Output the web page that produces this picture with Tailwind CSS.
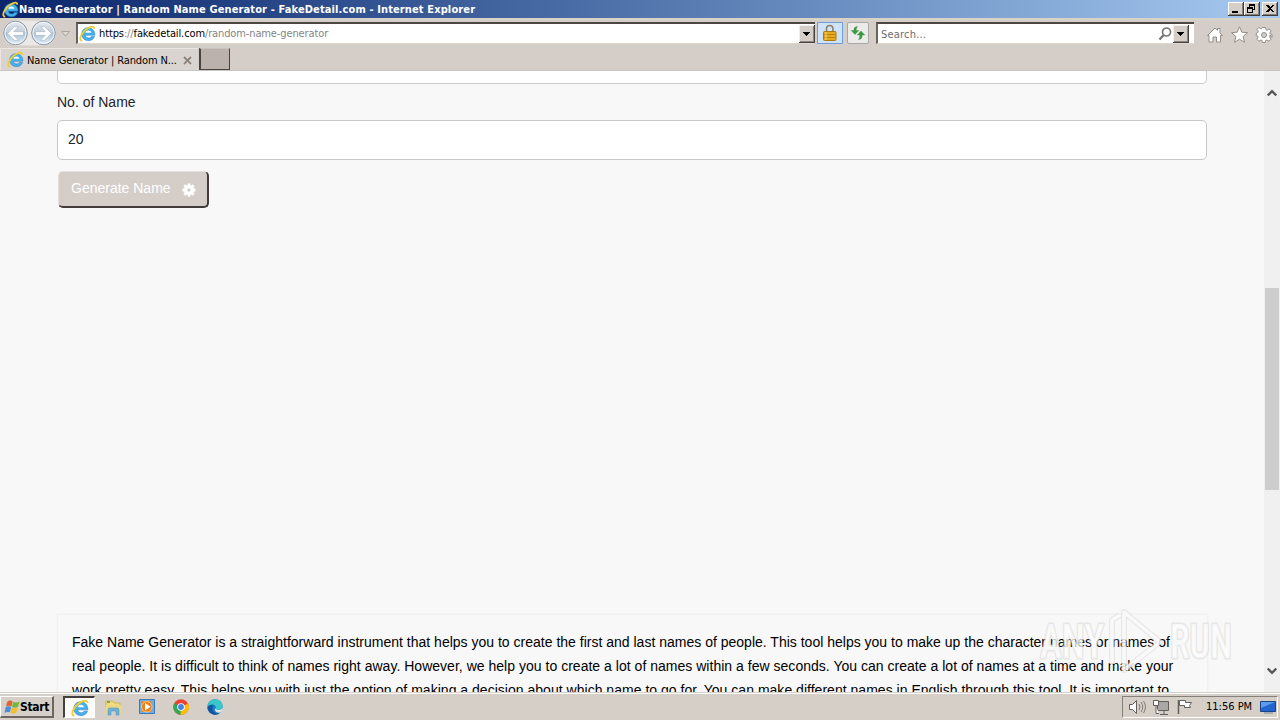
<!DOCTYPE html>
<html lang="en">
<head>
<meta charset="utf-8">
<title>Name Generator</title>
<script src="https://cdn.jsdelivr.net/npm/@tailwindcss/browser@4"></script>
</head>
<body class="w-[1280px] h-[720px] overflow-hidden bg-[#d5cfca] font-['DejaVu_Sans_Condensed','DejaVu_Sans',sans-serif] font-stretch-condensed text-[11px] text-black">
<svg class="hidden">
  <symbol id="ie" viewBox="0 0 16 16">
    <path d="M15 9.600H6c.3 3.200 4.600 3.300 5.600 1.200h3.100C12.700 16.800 2.500 16 2.500 8.500 2.500.4 15.200.3 15 9.600z" fill="#46b0ea" stroke="#2b82c8" stroke-width=".5"/>
    <path d="M6 7.300h5.600c-.3-2.900-5.100-3-5.600 0z" fill="#f5fbff"/>
    <path d="M3 15C-1 14.500 2 7 8 3.200c3.500-2.200 6.500-2.400 6.300.3" fill="none" stroke="#f0cc35" stroke-width="1.700"/>
  </symbol>
</svg>
<div class="flex flex-col w-[1280px] h-[720px]">
  <header class="h-[18px] shrink-0 flex items-center pl-[2px] pr-[2px] bg-linear-to-r from-[#0b246b] to-[#a6caf0] text-white font-bold">
    <svg class="w-[17px] h-[17px] shrink-0"><use href="#ie"/></svg>
    <span class="pt-[2px] whitespace-nowrap tracking-[0.122px]">Name Generator | Random Name Generator - FakeDetail.com - Internet Explorer</span>
    <div class="ml-auto flex">
      <svg class="w-4 h-[14px]" viewBox="0 0 16 14" shape-rendering="crispEdges"><path d="M0 0h16v14H0z" fill="#403c38"/><path d="M0 0h15v13H0z" fill="#fff"/><path d="M1 1h14v12H1z" fill="#85807a"/><path d="M1 1h13v11H1z" fill="#d5cfc8"/><path d="M4 9h6v2H4z" fill="#000"/></svg>
      <svg class="w-4 h-[14px]" viewBox="0 0 16 14" shape-rendering="crispEdges"><path d="M0 0h16v14H0z" fill="#403c38"/><path d="M0 0h15v13H0z" fill="#fff"/><path d="M1 1h14v12H1z" fill="#85807a"/><path d="M1 1h13v11H1z" fill="#d5cfc8"/><path d="M5 2h6v6H9V7h1V4H6v1H5zM3 5h6v6H3zm1 2v3h4V7z" fill="#000" fill-rule="evenodd"/></svg>
      <svg class="ml-[2px] w-4 h-[14px]" viewBox="0 0 16 14" shape-rendering="crispEdges"><path d="M0 0h16v14H0z" fill="#403c38"/><path d="M0 0h15v13H0z" fill="#fff"/><path d="M1 1h14v12H1z" fill="#85807a"/><path d="M1 1h13v11H1z" fill="#d5cfc8"/><path d="M4 3h2l2 2 2-2h2L9 6.500 12 10h-2L8 8l-2 2H4l3-3.500z" fill="#000"/></svg>
    </div>
  </header>

  <div class="h-[30px] shrink-0 flex items-start border-t-2 border-[#d8d3c9] bg-[#d5cec8]">
    <svg class="w-[76px] h-7 shrink-0" viewBox="0 20 76 28">
      <defs><linearGradient id="nav" x2="0" y2="1"><stop stop-color="#e6ebef"/><stop offset=".45" stop-color="#c3cfda"/><stop offset=".5" stop-color="#adc0d2"/><stop offset="1" stop-color="#e2f0fa"/></linearGradient></defs>
      <path d="M3 32a12.500 12.500 0 0 1 12-11.500h28A12.500 12.500 0 0 1 56 33a12.500 12.500 0 0 1-13 12.500H15A12.500 12.500 0 0 1 3 32" fill="#ebe8e6"/>
      <circle cx="15.500" cy="33" r="11.800" fill="url(#nav)" stroke="#8695a5"/><circle cx="15.500" cy="33" r="10.600" fill="none" stroke="#f2f7fb"/>
      <circle cx="43.500" cy="33" r="11.800" fill="url(#nav)" stroke="#8695a5"/><circle cx="43.500" cy="33" r="10.600" fill="none" stroke="#f2f7fb"/>
      <path d="M7.500 33.500l7-6.800h4l-4.800 5H23.500v3.600h-9.800l4.800 5h-4z" fill="#fff" stroke="#a3b3c2" stroke-width=".6"/>
      <path d="M51.500 33.500l-7-6.800h-4l4.800 5H35.500v3.600h9.800l-4.800 5h4z" fill="#fff" stroke="#a3b3c2" stroke-width=".6"/>
      <path d="M61.500 31.500h8l-4 4.500z" fill="#ddd8d4" stroke="#aaa39e"/>
    </svg>
    <div class="mt-[2px] w-[739px] h-[22px] shrink-0 flex items-center bg-white border-t-2 border-l-2 border-b border-t-[#4e4642] border-l-[#6b625c] border-b-[#ded7d0] pl-[1px]">
      <svg class="w-[17px] h-[17px] shrink-0"><use href="#ie"/></svg>
      <span class="ml-[3px] pt-[2px] whitespace-nowrap tracking-[-0.12px] text-[#858585]"><span class="text-black">https</span>://<span class="text-black">fakedetail.com</span>/random-name-generator</span>
      <svg class="ml-auto w-4 h-[18px] shrink-0" viewBox="0 0 16 18" shape-rendering="crispEdges"><path d="M0 0h16v18H0z" fill="#49433f"/><path d="M0 0h15v17H0z" fill="#f1eeea"/><path d="M1 1h14v16H1z" fill="#8b8580"/><path d="M1 1h13v15H1z" fill="#d5cec8"/><path d="M4 7h7v1h-1v1H9v1H8v1H7v-1H6V9H5V8H4z"/></svg>
    </div>
    <svg class="ml-[2px] mt-[2px] w-[26px] h-[22px] shrink-0" viewBox="0 0 26 22"><path d="M.5.5h25v21H.5z" fill="#cfe3f8" stroke="#6d9ed5"/><path d="M9.500 10V6.500q0-3 3.200-3t3.200 3V10" fill="none" stroke="#8c8269" stroke-width="1.600"/><rect x="6.500" y="9.500" width="12.500" height="9" rx="1" fill="#e6aa1c" stroke="#aa7818"/><path d="M7 12.500h11.500M7 15.500h11.500" stroke="#bd8110"/><path d="M9 10v8" stroke="#f6d66b"/></svg>
    <svg class="ml-1 mt-[2px] w-[22px] h-[22px] shrink-0" viewBox="0 0 22 22"><rect x=".5" y=".5" width="21" height="21" rx="1.500" fill="#ebebe9" stroke="#aaa8a6"/><path d="M10.500 4.500Q6.800 4.500 6.800 8.500H4.200L8 12.500l3.800-4H9.200Q9 6 10.500 4.500M11.500 17.500q3.700 0 3.700-4.500h2.600L14 9l-3.800 4h2.600q.2 3-1.300 4.500" fill="#3a9c40" stroke="#257f2b" stroke-width=".3"/></svg>
    <div class="ml-[7px] mt-[2px] w-[318px] h-[22px] shrink-0 flex items-center bg-white border-t-2 border-l-2 border-b border-t-[#4e4642] border-l-[#6b625c] border-b-[#ded7d0] pl-[3px] pr-1">
      <span class="pt-[3px] tracking-[0.2px] text-[#6d6d6d]">Search...</span>
      <svg class="ml-auto w-4 h-4" viewBox="0 0 16 16" fill="none" stroke="#777"><circle cx="8.500" cy="6" r="4" stroke-width="1.700"/><path d="M5.700 9L1.500 13.500" stroke-width="2.400"/></svg>
      <svg class="-ml-px mr-px w-4 h-[18px]" viewBox="0 0 16 18" shape-rendering="crispEdges"><path d="M0 0h16v18H0z" fill="#49433f"/><path d="M0 0h15v17H0z" fill="#f1eeea"/><path d="M1 1h14v16H1z" fill="#8b8580"/><path d="M1 1h13v15H1z" fill="#d5cec8"/><path d="M4 7h7v1h-1v1H9v1H8v1H7v-1H6V9H5V8H4z"/></svg>
    </div>
    <svg class="ml-[12px] mt-[6px] w-[68px] h-5 shrink-0" viewBox="1206 26 68 20" fill="#fff" stroke="#948e89"><path d="M1207.500 35.500l7.500-7.500 2.500 2.300v-1.800h2.500v4.300l2.500 2.700h-2v6.500h-4v-5h-3.500v5h-4v-6.500z"/><path d="M1239.500 26.800l2.300 5.400 5.700.5-4.400 3.800 1.400 5.800-5-3.100-5 3.100 1.400-5.800-4.400-3.800 5.700-.5z"/><g transform="translate(1264 35)"><path d="M-1.500-7.500h3l.5 2.200 1.200.5 1.900-1.300 2 2-1.300 1.900.5 1.200 1.700.5v3L6-.1 5.800 2.200 7 4.200l-2 2-2-1.200-1.300.5-.4 2h-2.800l-.4-2L-3.100 5l-2 1.200-2-2 1.200-2-.4-1-1.400-.4v-2.700l1.500-.5.5-1.300-1.400-1.900 2-2 1.900 1.300 1.200-.5z"/><circle r="2.500" fill="#d5cec8"/></g></svg>
  </div>

  <div class="h-[23px] shrink-0 flex border-b border-[#ccc6c0] bg-[#d5cec8]">
    <div class="w-[198px] flex items-center pl-[6px] border-l border-t border-[#ebe6e2] bg-[#d9d4d0] relative">
      <svg class="w-[17px] h-[17px] shrink-0"><use href="#ie"/></svg>
      <span class="ml-[3px] pt-[3px] whitespace-nowrap tracking-[-0.12px]">Name Generator | Random N...</span>
      <svg class="absolute left-[182px] top-[7px] w-[9px] h-[9px]" viewBox="0 0 9 9"><path d="M1 1l7 7M8 1L1 8" stroke="#8d8580" stroke-width="1.800"/></svg>
    </div>
    <div class="ml-[1px] w-[31px] h-[22px] bg-[#bbb2ad] border-l-2 border-r border-b border-t border-[#49423e] border-t-[#c9c2bd]"></div>
  </div>

  <main class="h-[621px] shrink-0 flex bg-[#f8f8f8] font-['Liberation_Sans',Arial,sans-serif] relative">
    <div class="w-[1264px] pl-[57px] h-full overflow-hidden flex flex-col">
      <div class="w-[1150px] h-[13px] shrink-0 bg-white border border-t-0 border-[#ccc] rounded-b-[5px]"></div>
      <div class="h-9 shrink-0 flex items-center pt-px text-[14px] text-[#212529]">No. of Name</div>
      <div class="w-[1150px] h-10 shrink-0 flex items-center bg-white border border-[#c8c8c8] rounded-[5px] pl-[10px] pb-px text-[14px] text-[#212529]">20</div>
      <button class="mt-[11px] ml-[1px] w-[151px] h-[37px] shrink-0 flex items-center pl-3 pb-px rounded-[5px] bg-[#d5cec8] border-r-2 border-b-2 border-[#413c3a] border-t border-l border-t-[#e4dfda] border-l-[#e4dfda] text-white text-[14px] whitespace-nowrap">
        <span>Generate Name</span>
        <svg class="ml-[11px] mt-[2px] w-[14px] h-[14px]" viewBox="-7 -7 14 14"><circle r="3.400" fill="none" stroke="#fff" stroke-width="3.400"/><path d="M0-6.500v3M0 3.500v3M-6.500 0h3M3.500 0h3M-4.700-4.700l2 2M2.700 2.700l2 2M4.700-4.700l-2 2M-2.700 2.700l-2 2" stroke="#fff" stroke-width="2.800"/></svg>
      </button>
      <section class="mt-[406px] w-[1151px] h-[100px] shrink-0 border border-[#f1f1f1] bg-[#f8f8f8] shadow-[0_0_2px_#eeeeee] pl-[14px] pt-[15px] text-[14px] leading-6">
        <p class="whitespace-nowrap"><span class="tracking-[0.005px]">Fake Name Generator is a straightforward instrument that helps you to create the first and last names of people. This tool helps you to make up the character names or names of</span><br><span class="tracking-[0.021px]">real people. It is difficult to think of names right away. However, we help you to create a lot of names within a few seconds. You can create a lot of names at a time and make your</span><br><span class="tracking-[0.021px]">work pretty easy. This helps you with just the option of making a decision about which name to go for. You can make different names in English through this tool. It is important to</span></p>
      </section>
    </div>
    <div class="w-4 h-full bg-[#f0f0f0] flex flex-col items-center">
      <svg class="mt-[17px] w-[10px] h-[10px] shrink-0" viewBox="0 0 10 10"><path d="M.7 7.500L5 3.200l4.300 4.300" fill="none" stroke="#58585a" stroke-width="2.400"/></svg>
      <div class="mt-[190px] w-[14px] h-[202px] shrink-0 bg-[#cdcdcd]"></div>
      <svg class="mt-auto mb-[16px] w-[10px] h-[10px] shrink-0" viewBox="0 0 10 10"><path d="M.7 2.500L5 6.800l4.300-4.300" fill="none" stroke="#58585a" stroke-width="2.400"/></svg>
    </div>
    <svg class="absolute left-[1030px] top-[535px] w-[210px] h-[74px]" viewBox="1030 606 210 74">
      <g font-family="Roboto, sans-serif" font-size="48" font-weight="500" fill="#fff" fill-opacity=".7" stroke="#cfcfcf" stroke-opacity=".45" stroke-width="3" stroke-linejoin="round" paint-order="stroke">
        <text x="1040" y="658" textLength="64" lengthAdjust="spacingAndGlyphs">ANY</text><text x="1170" y="658" textLength="62" lengthAdjust="spacingAndGlyphs">RUN</text>
      </g>
      <g fill="none" stroke-linejoin="round"><path d="M1124 612v58l36-28z M1112 664v-44l8-5" stroke="#cfcfcf" stroke-width="6" opacity=".4"/><path d="M1124 612v58l36-28z M1112 664v-44l8-5" stroke="#fff" stroke-width="3.500" opacity=".75"/></g>
    </svg>
  </main>

  <footer class="h-7 shrink-0 flex items-center bg-[#d5cfc7] border-t border-[#d5cfc7] shadow-[inset_0_1px_0_#ffffff]">
    <div class="mt-px w-[54px] h-[22px] flex items-center pl-[3px] border border-l-[#fff] border-t-[#fff] border-r-2 border-b-2 border-r-[#6c6661] border-b-[#6c6661] font-bold">
      <svg class="w-[16px] h-[16px] shrink-0" viewBox="0 0 15 15"><path d="M3 2.500q2.500-2 5-.5L7 7Q4.500 5.500 2 7z" fill="#e66031"/><path d="M8.500 2.500q2.500 1.500 6 0L13 7.500q-3 1.500-5.500 0z" fill="#72b83c"/><path d="M1.700 7.500q2.500-1.500 5 0l-1.200 5Q3 11.500.5 13z" fill="#4a8de0"/><path d="M7.200 8q2.500 1.500 5.500 0l-1.200 5q-2.500 1.500-5.500 0z" fill="#f4bd2c"/></svg>
      <span class="text-[12px] tracking-[-0.35px]">Start</span>
    </div>
    <div class="ml-[9px] mt-px w-[32px] h-[22px] flex items-center justify-center bg-[#fbfaf9] border-l-2 border-t-2 border-r border-b border-l-[#45403d] border-t-[#45403d] border-r-white border-b-white"><svg class="w-[18px] h-[18px]"><use href="#ie"/></svg></div>
    <svg class="ml-[10px] mt-px w-[126px] h-5" viewBox="105 697 126 20">
      <path d="M106 701h7l1 2h6v4h-14z" fill="#f4dc78" stroke="#c8a84a" stroke-width=".7"/><path d="M107 701h3v2h-3z" fill="#68ae53"/><path d="M106 705h15v9h-3v-4h-9v4h-3z" fill="#e9d886"/><path d="M108 715v-5q0-2 2-2h7q2 0 2 2v5h-3v-4h-5v4z" fill="#6fb1db" stroke="#4d8eb8" stroke-width=".5"/>
      <path d="M139.500 699.500h15v14h-15z" fill="#6eaee0" stroke="#3979b5"/><path d="M141 701h11v11h-11z" fill="#ef8d20"/><circle cx="146.800" cy="706.800" r="5.200" fill="#ee7e13" stroke="#fff" stroke-width=".5"/><path d="M145 703l5.500 3.800-5.500 3.800z" fill="#fff"/>
      <circle cx="181" cy="707" r="7.700" fill="#e84235"/><path d="M174.300 703.200l6.700 3.800 0 7.700A7.700 7.700 0 0 1 174.300 703.200" fill="#35a652"/><path d="M181 707l7-3.500a7.700 7.700 0 0 1-7.500 11.200z" fill="#fbbd0a"/><circle cx="181" cy="707" r="3.800" fill="#fff"/><circle cx="181" cy="707" r="2.900" fill="#4382ea"/>
      <circle cx="215" cy="707" r="7.700" fill="#197bc9"/><path d="M207.500 706Q209 699.300 215.200 699.300q7.300 0 7.500 7.200-.5 3.500-5.700 3.200-2.200-.5-1-2.300-.5-3-4-3-2.500 0-4.500 1.600" fill="#3ac7c7"/><path d="M207.400 708q2-4 6-3-3 5 2 8 3 1.200 5-.6-3 3-7 2-5-1-6-6.400" fill="#1555a0"/><path d="M216 707.500q-1 2 1.500 2.300 4 .5 5.300-2-.5 4-3 5-4 .5-5-3z" fill="#e1e4df"/>
    </svg>
    <div class="ml-auto mt-px mr-[2px] w-[156px] h-[22px] flex items-center border border-l-[#85807a] border-t-[#85807a] border-r-white border-b-white">
      <svg class="w-[76px] h-5 shrink-0" viewBox="1123 697 76 20" fill="#fff" stroke="#655f5b"><path d="M1129.500 704.500h3l4-4v13l-4-4h-3z"/><path d="M1139 704q2 3 0 6M1141 702q3.500 5 0 10M1143.500 701q4 6 0 12" fill="none" stroke="#817b77"/><path d="M1157.500 701.500h11v9h-11z" fill="#aaa6a3"/><path d="M1160 714.500h8M1164 711v3M1153.500 700.500h5v5h-5zM1156 706v7.500h3"/><path d="M1178.500 700v14" fill="none" stroke-width="1.500"/><path d="M1179.500 700.500h6v2h6l-2 3 1 2h-6v-2h-5z"/></svg>
      <span class="ml-[7px] pt-px whitespace-nowrap">11:56 PM</span>
      <svg class="ml-auto mr-[1px] w-4 h-4 shrink-0" viewBox="0 0 16 16"><path d="M.5 2.500h15v10H.5z" fill="#2365cc" stroke="#164386"/><path d="M1 3h14L1 9z" fill="#5c9bee"/><path d="M4 14h9" stroke="#7e8791"/></svg>
    </div>
  </footer>
</div>
</body>
</html>
